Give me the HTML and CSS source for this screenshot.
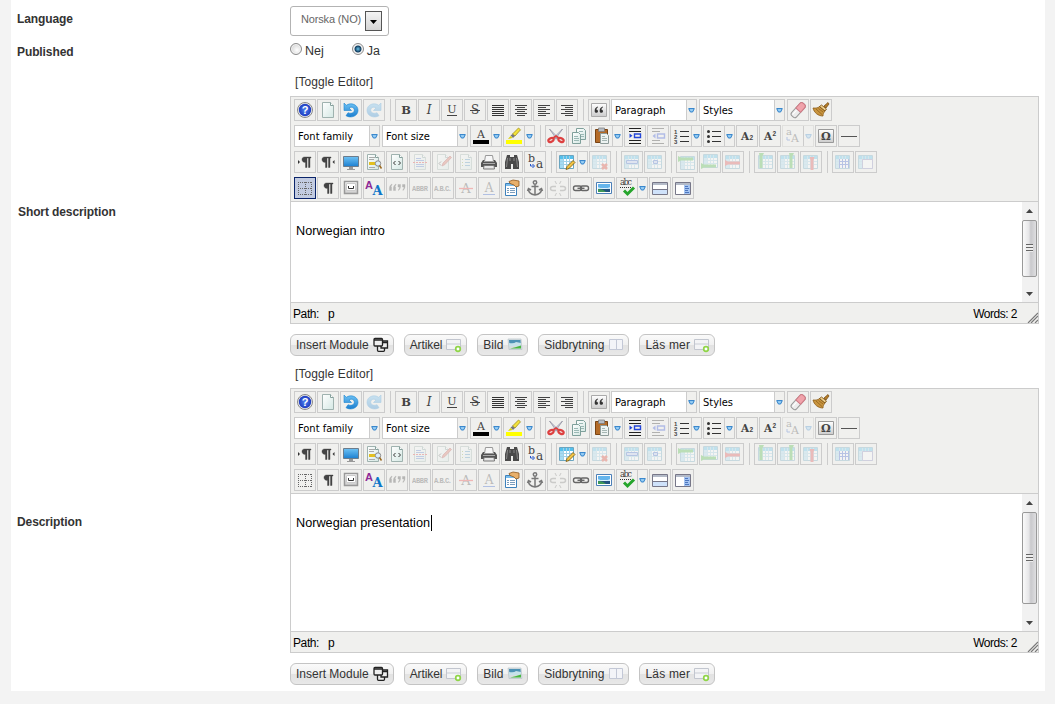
FILE: index.html
```html
<!DOCTYPE html>
<html lang="sv">

<head>
    <meta charset="utf-8">
    <meta name="viewport" content="width=device-width, initial-scale=1">
    <title>Norska (NO)</title>
    <link rel="stylesheet" href="styles.css">
</head>

<body>
    <!-- shapes shared by several icons -->
    <svg class="sprite" width="0" height="0">
        <defs>
            <linearGradient id="g-blue" x1="0" y1="0" x2="0" y2="1"><stop offset="0" stop-color="#6fc3f5"/><stop offset="1" stop-color="#1c7fd0"/></linearGradient>
            <linearGradient id="g-page" x1="0" y1="0" x2="1" y2="1"><stop offset="0" stop-color="#fff"/><stop offset="1" stop-color="#d5e8e4"/></linearGradient>
            <linearGradient id="g-grey" x1="0" y1="0" x2="0" y2="1"><stop offset="0" stop-color="#fff"/><stop offset="1" stop-color="#ccc"/></linearGradient>
            <radialGradient id="g-help"><stop offset="0" stop-color="#4d83f0"/><stop offset="1" stop-color="#1f3cc0"/></radialGradient>
            <g id="page"><path d="M4.500 2.500h8l3 3v12h-11z" fill="url(#g-page)" stroke="#9fb2af"/><path d="M12.500 2.500v3h3" fill="#fff" stroke="#86a09c"/></g>
            <g id="grid"><path d="M2.500 3.500h14v13h-14z" fill="#fff" stroke="#6aa5c0"/><path d="M3 4h13v3H3z" fill="#55c0ec"/><path d="M3 7h3v9H3z" fill="#a5dcf3"/><path d="M3 9.500h13M3 12.500h13M6.500 4v12M9.500 4v12M12.500 4v12" stroke="#9fd0e6"/></g>
            <path id="pil" d="M9.500 5H16v1h-1v9.500h-1.500V6H12v9.500h-1.500v-5C6 10.500 6 5 9.500 5z" fill="#444" stroke="#444" stroke-width=".4"/>
            <path id="turn" d="M3 3v7.500h7.500L8 8c3-2 5.500 0 5.300 2.500-.3 2.500-3.300 3.500-6.300 2.200l-2 3C9.500 18.500 16.800 16.500 17 10.500 17 4.500 10 2 5.300 5.300z" fill="url(#g-blue)" stroke="#1d84cf" stroke-width=".6"/>
            <path id="arrow" d="M.7.600h5.600L4.600 4H2.400z" fill="#9ad0f5" stroke="#2d7fc9"/>
        </defs>
    </svg>

    <template id="icons">
        <svg>
            <g id="help"><circle cx="10" cy="10" r="7.500" fill="#eee" stroke="#888"/><circle cx="10" cy="10" r="6.200" fill="url(#g-help)"/><text x="10" y="14" text-anchor="middle" class="sans b" font-size="11" fill="#fff">?</text></g>
            <g id="newdoc"><use href="#page"/></g>
            <g id="undo"><use href="#turn"/></g>
            <g id="redo"><use href="#turn" transform="matrix(-1 0 0 1 20 0)"/></g>
            <g id="bold"><text x="10" y="14" text-anchor="middle" class="serif b" font-size="11.500">B</text></g>
            <g id="italic"><text x="10" y="14" text-anchor="middle" class="serif i" font-size="12">I</text></g>
            <g id="underline"><text x="10" y="13" text-anchor="middle" class="serif" font-size="11">U</text><path d="M5 15.500h10" stroke="#444"/></g>
            <g id="strike"><text x="10" y="14" text-anchor="middle" class="serif" font-size="12">S</text><path d="M5 10.500h10" stroke="#444"/></g>
            <g id="full"><path d="M4 5.500h12M4 7.500h12M4 9.500h12M4 11.500h12M4 13.500h12M4 15.500h12" stroke="#333"/></g>
            <g id="center"><path d="M4 5.500h12M6 7.500h8M4 9.500h12M6 11.500h8M4 13.500h12M6 15.500h8" stroke="#444"/></g>
            <g id="left"><path d="M4 5.500h12M4 7.500h8M4 9.500h12M4 11.500h8M4 13.500h12M4 15.500h8" stroke="#444"/></g>
            <g id="right"><path d="M4 5.500h12M8 7.500h8M4 9.500h12M8 11.500h8M4 13.500h12M8 15.500h8" stroke="#444"/></g>
            <g id="quote"><path d="M2.500 3.500h15v13h-15z" fill="url(#g-grey)" stroke="#aaa"/><path d="M9 6.500C6.500 7 5.500 9 5.700 11.500c.3 2 3.300 1.500 3.300-.3 0-1-.7-1.500-1.600-1.500C7.500 8.500 8 7.700 9 7.200zM14 6.500c-2.500.5-3.500 2.500-3.300 5 .3 2 3.300 1.500 3.300-.3 0-1-.7-1.500-1.600-1.500.1-1.200.6-2 1.600-2.500z" fill="#333"/></g>
            <g id="eraser"><g transform="rotate(-48 10 10)"><rect x="1.500" y="7" width="17" height="6.500" rx="2.500" fill="#ececec" stroke="#999"/><path d="M10 7h6q2.500 0 2.500 2.500v1.500q0 2.500-2.500 2.500h-6z" fill="#f0a3ab" stroke="#cf7984"/><path d="M3 9h6" stroke="#fff"/></g></g>
            <g id="brush"><path d="M13 6l4-3.500 1 1.500-3 4z" fill="#b67c28" stroke="#704509" stroke-width=".7"/><path d="M2 8c3 .3 5 0 6.500-1.500l5.500 4.500c-1.500 2-2 3-2 5C7 16 3 12.500 2 8z" fill="#c9953f" stroke="#8a5a17" stroke-width=".8"/><path d="M8.500 6.500l2-1.500 5 4-1.500 2z" fill="#efd08c" stroke="#704509" stroke-width=".8"/><path d="M5 9l6 5.500M7.500 8.500L12 12" stroke="#8a5a17" stroke-width=".7"/></g>
            <g id="forecolor"><text x="10" y="12" text-anchor="middle" class="serif" font-size="11">A</text><path d="M2 14h16v4H2z" fill="#000"/></g>
            <g id="backcolor"><path d="M2 14h16v4H2z" fill="#ff0"/><path d="M8.500 8l6-6 2 1.800L11 10z" fill="#f2e23a" stroke="#9f8d19" stroke-width=".8"/><path d="M6.500 9.500l2-1.500 2.500 2-2 2z" fill="#777"/><path d="M4 13l2.500-3 2 2z" fill="#d8d000"/></g>
            <g id="cut"><path d="M3.500 3l9 9-2 1zM16.500 3l-9 9 2 1z" fill="#dde" stroke="#889" stroke-width=".7"/><ellipse cx="5" cy="14" rx="2.800" ry="1.800" fill="none" stroke="#dd4040" stroke-width="2.200" transform="rotate(-30 5 14)"/><ellipse cx="15" cy="14" rx="2.800" ry="1.800" fill="none" stroke="#dd4040" stroke-width="2.200" transform="rotate(30 15 14)"/><path d="M7 12l3-2 3 2" fill="none" stroke="#dd4040" stroke-width="1.800"/></g>
            <g id="copy"><path d="M7.500 2.500h7l2 2v9h-9z" fill="url(#g-page)" stroke="#7fa09b"/><path d="M3.500 6.500h6l2 2v9h-8z" fill="url(#g-page)" stroke="#7fa09b"/><path d="M5 10.500h4M5 12.500h5M5 14.500h5M10 5.500h4M12 8.500h3M12 10.500h3" stroke="#9bb9b5"/></g>
            <g id="paste"><path d="M3.500 3.500h12v13h-12z" fill="#b46b28" stroke="#794312"/><path d="M6.500 2h6v3.500h-6z" fill="#b7bdc5" stroke="#777" stroke-width=".7"/><path d="M8.500 7.500h6l2 2v8h-8z" fill="#edf3f2" stroke="#8d9b99"/><path d="M10 10.500h3M10 12.500h5M10 14.500h5" stroke="#a5b6b3"/></g>
            <g id="indent"><path d="M4 2.500h12M4 5.500h12M4 14.500h12M4 17.500h12" stroke="#222"/><path d="M9.500 8h6v3.500h-6z" fill="none" stroke="#2446d8" stroke-width="1.400"/><path d="M4.500 7.500l3 2.300-3 2.300z" fill="#2446d8"/></g>
            <g id="outdent"><path d="M4 2.500h12M4 5.500h8M4 14.500h8M4 17.500h12" stroke="#222"/><path d="M9.500 8h7v4h-7z" fill="none" stroke="#2446d8" stroke-width="1.400"/><path d="M7.500 7.500l-3 2.500 3 2.500z" fill="#2446d8"/></g>
            <g id="numlist"><path d="M9 5.500h9M9 10.500h9M9 15.500h9" stroke="#333"/><text x="3" y="7.500" class="sans b" font-size="6">1</text><text x="3" y="12.500" class="sans b" font-size="6">2</text><text x="3" y="17.500" class="sans b" font-size="6">3</text></g>
            <g id="bullist"><path d="M8 5.500h9M8 10.500h9M8 15.500h9" stroke="#333"/><g fill="#333"><circle cx="4.500" cy="5.500" r="1.500"/><circle cx="4.500" cy="10.500" r="1.500"/><circle cx="4.500" cy="15.500" r="1.500"/></g></g>
            <g id="sub"><text x="4" y="14" class="serif b" font-size="10.500">A</text><text x="12.500" y="14" class="sans b" font-size="6.500">2</text></g>
            <g id="sup"><text x="4" y="14" class="serif b" font-size="10.500">A</text><text x="12.500" y="10" class="sans b" font-size="6.500">2</text></g>
            <g id="case"><text x="3" y="9" class="serif" font-size="10">a</text><text x="8" y="16" class="serif" font-size="11">A</text><path d="M4 11v3h3" fill="none" stroke="#36c"/></g>
            <g id="char"><path d="M2.500 3.500h15v13h-15z" fill="url(#g-grey)" stroke="#999"/><text x="10" y="14" text-anchor="middle" class="serif b" font-size="11">Ω</text></g>
            <g id="hr"><path d="M2 10.500h16" stroke="#555"/></g>
            <g id="ltr"><use href="#pil"/><path d="M3 8l2 2-2 2z" fill="#333"/></g>
            <g id="rtl"><use href="#pil" x="-3"/><path d="M16.500 8l-2 2 2 2z" fill="#333"/></g>
            <g id="pilcrow"><use href="#pil" x="-1"/></g>
            <g id="screen"><path d="M2.500 4.500h15v10h-15z" fill="url(#g-blue)" stroke="#6c7c8c"/><path d="M8 15h4v2h2v1H6v-1h2z" fill="#999"/></g>
            <g id="preview"><use href="#page" x="-1"/><path d="M5 5.500h6M5 7.500h5M5 15.500h6" stroke="#aaa"/><path d="M5 10h6v3H5z" fill="#e2c021"/><circle cx="14" cy="11.500" r="2.700" fill="#dceefa" stroke="#888"/><path d="M15.500 13.500l2 3" stroke="#9b6b22" stroke-width="1.500"/></g>
            <g id="code"><use href="#page"/><path d="M8.500 9l-2 2 2 2M11.500 9l2 2-2 2" fill="none" stroke="#333"/></g>
            <g id="pagebreak"><use href="#page"/><path d="M6 6.500h5M6 8.500h8M6 12.500h8M6 14.500h8" stroke="#567bd0"/><path d="M3 10.500h14" stroke="#d33" stroke-dasharray="2 1"/></g>
            <g id="edit"><use href="#page"/><path d="M8 9.500l-2 2 2 2" fill="none" stroke="#444"/><path d="M9 14l1-3 7-7 1.500 1.500-6.500 7z" fill="#d86b58" stroke="#a33" stroke-width=".7"/></g>
            <g id="lines"><use href="#page"/><path d="M9 7.500h5M9 10.500h5M9 13.500h5" stroke="#4a90c0"/><path d="M6 7.500h1M6 10.500h1M6 13.500h1" stroke="#8a3"/></g>
            <g id="print"><path d="M6.500 3.500h7l1 6h-9z" fill="#f7f7f7" stroke="#999"/><path d="M4 8h1.500l-.5 2h10l-.5-2H16l2 3v4H2v-4z" fill="#555"/><path d="M5 13.500h10l.5 3.500h-11z" fill="#e6e6e6" stroke="#777"/><path d="M4 11.500h12" stroke="#aaa"/></g>
            <g id="find"><path d="M5 3h3v2h4V3h3l2 7v7h-6v-5H9v5H3v-7z" fill="#4a4a4a"/><path d="M5.500 6l-1 9M14.500 6l1 9M8 6v3M12 6v3" stroke="#888"/></g>
            <g id="replace"><text x="3" y="10" class="serif" font-size="11">b</text><text x="11" y="16" class="serif" font-size="12">a</text><path d="M5.500 12v2h3M7.500 12l2 2-2 2" fill="none" stroke="#25c"/></g>
            <g id="table"><use href="#grid"/><path d="M9 17.500l1-3 6-6 2 2-6 6z" fill="#f3c545" stroke="#74540c" stroke-width=".8"/></g>
            <g id="deltable"><use href="#grid"/><path d="M12 12l5 5m0-5l-5 5" stroke="#d32" stroke-width="2.500"/></g>
            <g id="rowprops"><use href="#grid"/><path d="M4.500 8.500h11v3h-11z" fill="#b9c9f7" stroke="#36c"/></g>
            <g id="cellprops"><use href="#grid"/><path d="M8.500 8.500h4v3h-4z" fill="#b9c9f7" stroke="#36c"/></g>
            <g id="rowbefore"><use href="#grid" x="1" y="1"/><path d="M1 5l3 1.500h12v3H4L1 11z" fill="#44b83a" transform="translate(0 -1)"/></g>
            <g id="rowafter"><use href="#grid" x="1" y="-1"/><path d="M1 11l3 1.500h12v3H4L1 17z" fill="#44b83a"/></g>
            <g id="delrow"><use href="#grid"/><path d="M2 8l3 1.500h12v3H5L2 14z" fill="#d44"/></g>
            <g id="colbefore"><use href="#grid" x="1"/><path d="M4 1h5L7.500 4v12h-3V4z" fill="#44b83a"/></g>
            <g id="colafter"><use href="#grid"/><path d="M11 1h5l-1.500 3v12h-3V4z" fill="#44b83a"/></g>
            <g id="delcol"><use href="#grid"/><path d="M8.500 5h5L12.500 8v10h-3V8z" fill="#d44"/></g>
            <g id="split"><use href="#grid"/><path d="M6.500 7v9M9.500 7v9M12.500 7v9M15.500 7v9M6 9.500h10M6 12.500h10" stroke="#3b5fce"/></g>
            <g id="merge"><use href="#grid"/><path d="M6.500 7.500h10v9h-10z" fill="#fff" stroke="#88b"/></g>
            <g id="aid"><path d="M3.500 4v13M10.500 4v13M16.500 4v13M3 4.500h14M3 10.500h14M3 16.500h14" stroke="#666" stroke-dasharray="1 1"/></g>
            <g id="nbsp"><path d="M3.500 3.500h13v12h-13z" fill="url(#g-grey)" stroke="#999" stroke-width="1.500"/><path d="M5.500 5.500h9v7h-9z" fill="#fff" stroke="#ccc"/><path d="M7.500 8v2.500h5V8" fill="none" stroke="#333"/></g>
            <g id="style"><text x="1" y="11" class="sans b" font-size="11" fill="#8d2a96">A</text><text x="8.500" y="17" class="serif b" font-size="13" fill="#0d76c8">A</text></g>
            <g id="cite"><path d="M5 6C3 7 2 9 2.500 12.500h2V9H4q0-1.500 1-2zM9 6C7 7 6 9 6.500 12.500h2V9H8q0-1.500 1-2zM11 6.500h2.500q.5 4-2 6v-1q1-1 1-2.500H11zM15.500 6.500H18q.5 4-2 6v-1q1-1 1-2.500h-1.500z" fill="#333" stroke="#333" stroke-width=".4"/></g>
            <g id="abbr"><text x="2" y="13" class="mono b" font-size="7" textLength="16">ABBR</text></g>
            <g id="acronym"><text x="1" y="13" class="mono b" font-size="7" textLength="18">A.B.C.</text></g>
            <g id="del"><text x="10" y="15" text-anchor="middle" class="serif" font-size="13">A</text><path d="M3 10.500h14" stroke="#e33" stroke-width="1.300"/></g>
            <g id="ins"><text x="10" y="14" text-anchor="middle" class="serif" font-size="12">A</text><path d="M4 16.500h12" stroke="#25c"/></g>
            <g id="attribs"><path d="M3.500 5.500h11v12h-11z" fill="#fff" stroke="#3d82bd"/><path d="M4 6h10v2H4z" fill="#7abdec"/><path d="M5 10.500h2M8 10.500h5M5 12.500h2M8 12.500h5M5 14.500h2M8 14.500h5" stroke="#7a9dbd"/><path d="M7 3.500l4-1.500 6 1v5l-3 1-2-2-4-1.500z" fill="#e8b06b" stroke="#90591f" stroke-width=".8"/></g>
            <g id="anchor"><g fill="none" stroke="#777" stroke-width="1.500"><circle cx="10" cy="4.500" r="1.700"/><path d="M10 6.500v10.500M6.500 8.500h7M3.500 11c0 4 3 5.500 6.500 6 3.500-.5 6.500-2 6.500-6M2.500 13l1-2.500L6 12M17.500 13l-1-2.500L14 12"/></g></g>
            <g id="unlink"><g fill="none" stroke="#777" stroke-width="1.500"><path d="M8 8.500H5q-2.500 0-2.500 2t2.500 2h3M12 8.500h3q2.500 0 2.500 2t-2.500 2h-3"/><path d="M7 3l1.500 3M13 3l-1.500 3M7 18l1.500-3M13 18l-1.500-3" stroke-width="1"/></g></g>
            <g id="link"><g fill="none" stroke="#666" stroke-width="1.400"><rect x="2.500" y="8" width="8" height="4.500" rx="2"/><rect x="9.500" y="8" width="8" height="4.500" rx="2"/><path d="M6.500 10.300h7"/></g></g>
            <g id="image"><path d="M2.500 4.500h15v11h-15z" fill="#fff" stroke="#4c80b8"/><path d="M4 6h12v4H4z" fill="#65b5ec"/><path d="M4 9q6 3 12 0v2H4z" fill="#cbe9fb"/><path d="M4 11h12v3H4z" fill="#23537f"/><path d="M4 11q5 0 8 3H4z" fill="#3f9857"/></g>
            <g id="spell"><text x="3" y="7" class="serif" font-size="8.500" textLength="12">abc</text><path d="M3 9.500h11" stroke="#333" stroke-dasharray="1 1"/><path d="M7 12.500l3.500 3.500L17 9.500" fill="none" stroke="#26a52c" stroke-width="3"/></g>
            <g id="layer"><path d="M2.500 4.500h15v12h-15z" fill="#fff" stroke="#778"/><path d="M3 5h14v2H3z" fill="#b4bbc8"/><path d="M3 11.500h14" stroke="#778"/><path d="M3 12h14v4H3z" fill="#cfe2fa"/></g>
            <g id="template"><path d="M2.500 4.500h15v12h-15z" fill="#fff" stroke="#778"/><path d="M3 5h14v2H3z" fill="#b4bbc8"/><path d="M11 7h6v9h-6z" fill="#a5c4f2"/><path d="M12 8.500h3M12 10.500h4M12 12.500h3M12 14.500h4" stroke="#4c76be"/></g>
            <!-- icons of the buttons below the editor -->
            <g id="b-module"><g fill="#eee" stroke="#222" stroke-width="1.300"><path d="M4.500 8v5.300q0 1 1 1h5q1 0 1-1V10"/><path d="M8 4h6.500v7H8z"/><rect x="1" y="1.500" width="8.500" height="7.500" rx="1"/><path d="M1 3h8.500M10 5.500h5"/></g></g>
            <g id="b-add"><path d="M.5 2.500h14v10H.5z" fill="#f3f4f6" stroke="#c2c6cf"/><path d="M1 7h13" stroke="#c9cdd5"/><circle cx="12" cy="12" r="2.300" fill="#fff" stroke="#8fd548" stroke-width="1.700"/></g>
            <g id="b-image"><path d="M1 2h13l1 10.500H2z" fill="#d6dde0" stroke="#b9c4ca" stroke-width=".7"/><path d="M2 3h11.500l.3 4H2.300z" fill="#4d92b5"/><path d="M2 6q5 1 7-1l5 1v3H2z" fill="#c6e2ea"/><path d="M3 11.500q5-1 11-3v3z" fill="#49b83e"/></g>
            <g id="b-break"><path d="M1.500 2.500h13v10h-13zM8.500 3v10" fill="#f3f4f8" stroke="#c3c8d6"/></g>
        </svg>
    </template>

    <div class="panel">
        <div class="row row-language">
            <label class="label">Language</label>
            <div class="select">
                <span>Norska (NO)</span>
                <span class="select-arrow"></span>
            </div>
        </div>
        <div class="row row-published">
            <label class="label">Published</label>
            <div class="radios">
                <label><input type="radio" name="published">Nej</label>
                <label><input type="radio" name="published" checked>Ja</label>
            </div>
        </div>
        <div class="row row-short">
            <label class="label">Short description</label>
            <div class="field" data-aid="on">
                <a class="toggle">[Toggle Editor]</a>
                <div class="editor">
                    <div class="toolbar"></div>
                    <div class="content">
                        <p>Norwegian intro</p>
                        <div class="scrollbar"><i class="up"></i><span class="thumb"></span><i class="down"></i></div>
                    </div>
                </div>
            </div>
        </div>
        <div class="row row-long">
            <label class="label">Description</label>
            <div class="field">
                <a class="toggle">[Toggle Editor]</a>
                <div class="editor">
                    <div class="toolbar"></div>
                    <div class="content">
                        <p class="caret">Norwegian presentation</p>
                        <div class="scrollbar"><i class="up"></i><span class="thumb"></span><i class="down"></i></div>
                    </div>
                </div>
            </div>
        </div>
    </div>

    <template id="footer">
        <div class="status">
            <span class="path">Path:</span><span>p</span>
            <span class="words">Words: 2</span>
            <svg class="grip" width="11" height="11"><path d="M1 11L11 1M4 11l7-7M8 11l3-3" stroke="#777" stroke-width="1.200"/></svg>
        </div>
    </template>

    <script>
        // "|" = separator, "~" = disabled, "+" = with menu arrow, "=" = list box
        const rows = [
            "help,newdoc,undo,~redo,|,bold,italic,underline,strike,full,center,left,right,|,quote,=Paragraph,=Styles,eraser,brush",
            "=Font family,=Font size,forecolor+,backcolor+,|,cut,copy,paste+,indent,~outdent,numlist+,bullist+,sub,sup,~case+,char,hr",
            "ltr,rtl,screen,preview,code,~pagebreak,~edit,~lines,print,find,replace,|,table+,~deltable,|,~rowprops,~cellprops,|,~rowbefore,~rowafter,~delrow,|,~colbefore,~colafter,~delcol,|,~split,~merge",
            "aid,pilcrow,nbsp,style,~cite,~abbr,~acronym,~del,~ins,attribs,anchor,~unlink,link,image,spell+,layer,template"
        ]
        const buttons = [
            ["module", "Insert Module"],
            ["add", "Artikel"],
            ["image", "Bild"],
            ["break", "Sidbrytning"],
            ["add", "Läs mer"]
        ]
        const icons = document.getElementById("icons").content
        const icon = (id, size) => `<svg class="icon" viewBox="0 0 ${size} ${size}" width="${size}" height="${size}">${icons.getElementById(id).innerHTML}</svg>`
        const arrow = `<span class="arrow"><svg width="7" height="5"><use href="#arrow"/></svg></span>`
        const item = name => {
            if (name === "|") return `<span class="sep"></span>`
            if (name[0] === "=") return `<a class="list"><span class="list-text">${name.slice(1)}</span>${arrow}</a>`
            const id = name.replace(/[~+]/g, "")
            const cls = ["btn", "btn-" + id]
            if (name[0] === "~") cls.push("disabled")
            return `<a class="${cls.join(" ")}">${icon(id, 20)}${name.endsWith("+") ? arrow : ""}</a>`
        }
        const toolbarHtml = rows.map(row => `<div class="tools">${row.split(",").map(item).join("")}</div>`).join("")
        const buttonsHtml = buttons.map(([id, text]) => `<a>${text}${icon("b-" + id, 16)}</a>`).join("")
        for (const field of document.querySelectorAll(".field")) {
            field.querySelector(".toolbar").innerHTML = toolbarHtml
            field.querySelector(".editor").append(document.getElementById("footer").content.cloneNode(true))
            const bar = document.createElement("div")
            bar.className = "buttons"
            bar.innerHTML = buttonsHtml
            field.append(bar)
            if (field.dataset.aid) field.querySelector(".btn-aid").classList.add("active")
        }
    </script>
</body>

</html>
```
FILE: styles.css
```css
* {
    box-sizing: border-box;
}

body {
    margin: 0;
    background: #f3f3f3;
    color: #333;
    font: 12px/16px "Liberation Sans", Arial, sans-serif;
}

.sprite {
    display: block;
}

.panel {
    width: 1034px;
    height: 691px;
    margin-left: 11px;
    padding-left: 6px;
    background: #fff;
}

.row {
    display: grid;
    grid-template-columns: 273px 749px;
    align-items: center;
}

.label {
    font-weight: bold;
    letter-spacing: -.1px;
}

.row-language {
    height: 36px;
    align-items: start;
    padding-top: 6px;
}

.row-language .label {
    padding-top: 5px;
}

.row-published {
    height: 33px;
    padding-bottom: 1px;
}

.row-short {
    height: 292px;
}

.row-long {
    height: 329px;
}

.row-short .label {
    padding: 0 0 7px 1px;
}

.row-long .label {
    padding-bottom: 8px;
}

.select {
    display: flex;
    justify-content: space-between;
    width: 99px;
    height: 30px;
    padding: 4px 6px 0 10px;
    border: 1px solid #b3b3b3;
    border-radius: 3px;
    color: #666;
    font-size: 11px;
    letter-spacing: -.15px;
    line-height: 17px;
    white-space: nowrap;
}

.select-arrow {
    width: 17px;
    height: 20px;
    padding: 8px 0 0 4px;
    border: 1px solid #555;
    background: linear-gradient(#f4f4f4, #d4d4d4);
}

.select-arrow::before {
    content: "";
    display: block;
    width: 7px;
    height: 4px;
    background: #000;
    clip-path: polygon(0 0, 100% 0, 50% 100%);
}

.radios {
    display: flex;
    gap: 28px;
    margin-top: -2px;
    font-size: 12.500px;
}

.radios label {
    display: flex;
    gap: 3px;
}

.radios input {
    appearance: none;
    width: 12px;
    height: 12px;
    margin: 0;
    border: 1px solid #8b8b8b;
    border-radius: 50%;
    background: radial-gradient(circle at 60% 60%, #fff, #c8c8c8);
    box-shadow: inset 0 0 0 1px #f4f4f4;
}

.radios input:checked {
    background: radial-gradient(circle, #6cc4ea 0, #103d60 3px, #eee 4px);
}

.toggle {
    display: block;
    height: 22px;
    padding-left: 5px;
    letter-spacing: .1px;
}

.editor {
    border: 1px solid #ccc;
}

.toolbar {
    display: flex;
    flex-direction: column;
    gap: 4px;
    height: 104px;
    padding: 2px 3px 0;
    background: #f0f0ee;
}

.tools {
    display: flex;
    height: 22px;
}

.btn,
.list {
    display: flex;
    height: 22px;
    margin-right: 1px;
    border: 1px solid #ccc;
}

.icon {
    fill: #444;
}

.disabled .icon,
.disabled .arrow svg {
    opacity: .3;
}

.btn-case {
    border-color: #e0e0de;
}

.active {
    border-color: #0a246a;
    background: #c2cbe0;
}

.sep {
    width: 1px;
    margin: 0 4px;
    background: #ccc;
}

.arrow {
    display: flex;
    align-items: center;
    justify-content: center;
    width: 10px;
    border-left: 1px solid #ccc;
}

.list {
    width: 86px;
    margin-right: 2px;
}

.list-text {
    flex: 1;
    padding-left: 3px;
    background: #fff;
    color: #000;
    font: 11px/21px "DejaVu Sans Condensed", "DejaVu Sans", sans-serif;
    font-stretch: condensed;
    white-space: nowrap;
}

.serif {
    font-family: "DejaVu Serif", serif;
}

.sans {
    font-family: "Liberation Sans", sans-serif;
}

.mono {
    font-family: "Liberation Mono", monospace;
}

.b {
    font-weight: bold;
}

.i {
    font-style: italic;
}

.content {
    display: flex;
    justify-content: space-between;
    height: 101px;
    border-top: 1px solid #ccc;
    color: #000;
}

.row-long .content {
    height: 138px;
}

.content p {
    margin: 21px 0 0 5px;
    height: 16px;
    font-size: 12.700px;
}

.content .caret {
    padding-right: 1px;
    border-right: 1px solid #000;
}

.scrollbar {
    display: flex;
    flex-direction: column;
    align-items: center;
    justify-content: space-between;
    width: 16px;
    padding: 7px 1px 6px 0;
    background: #f1f1f1;
}

.up,
.down {
    width: 7px;
    height: 4px;
    background: #444;
    clip-path: polygon(50% 0, 100% 100%, 0 100%);
}

.down {
    clip-path: polygon(0 0, 100% 0, 50% 100%);
}

.thumb {
    display: flex;
    width: 15px;
    height: 57px;
    margin-bottom: 9px;
    border: 1px solid #999;
    border-radius: 2px;
    background: linear-gradient(90deg, #fafafa, #e6e6e8 45%, #c9c9cc 60%, #dedee0);
}

.thumb::before {
    content: "";
    width: 7px;
    height: 8px;
    margin: auto;
    background: repeating-linear-gradient(#666 0 1px, #eee 1px 3px);
}

.row-long .thumb {
    height: 92px;
    margin-bottom: 11px;
}

.status {
    display: flex;
    height: 21px;
    padding-left: 2px;
    border-top: 1px solid #ccc;
    background: #f0f0ee;
    color: #000;
    line-height: 22px;
}

.path {
    width: 35px;
    letter-spacing: -.4px;
}

.words {
    margin-left: auto;
    padding-right: 10px;
    letter-spacing: -.5px;
}

.grip {
    align-self: flex-end;
}

.buttons {
    display: flex;
    gap: 10px;
    margin-top: 10px;
}

.buttons a {
    display: flex;
    align-items: center;
    gap: 4px;
    height: 22px;
    padding: 0 4px 0 5px;
    border: 1px solid #c4c4c4;
    border-radius: 6px;
    background: linear-gradient(#fafafa, #f0f0f0 50%, #e2e2e2 50%, #e8e8e8);
    white-space: nowrap;
}

.buttons a:nth-child(2) {
    letter-spacing: -.1px;
}

.buttons a:last-child {
    letter-spacing: .2px;
}
```
